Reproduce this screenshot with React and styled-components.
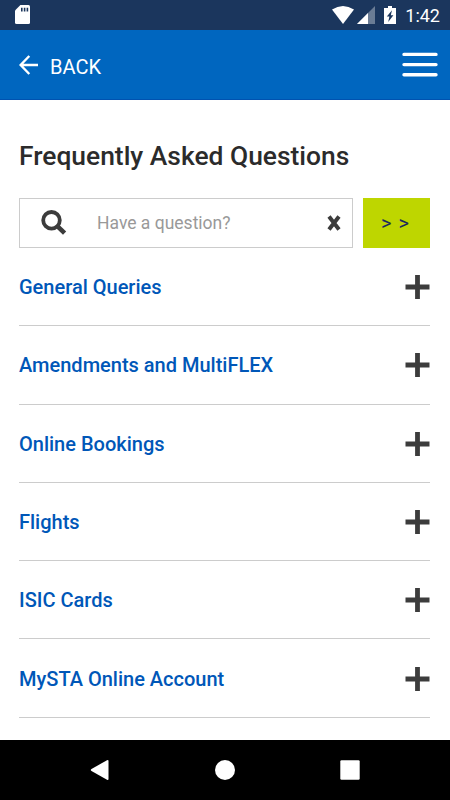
import React from "react";
import styled, { createGlobalStyle } from "styled-components";

const topics = [
  "General Queries",
  "Amendments and MultiFLEX",
  "Online Bookings",
  "Flights",
  "ISIC Cards",
  "MySTA Online Account",
];

const App = () => {
  return (
    <Screen>
      <GlobalStyle />
      <StatusBar>
        <svg width="15" height="19" viewBox="0 0 15 19">
          <path
            fill="#fff"
            d="M5.4 0H13.5Q15 0 15 1.5V17.5Q15 19 13.5 19H1.5Q0 19 0 17.5V5.4Z"
          />
          <path stroke="#1b365d" strokeWidth="1.6" d="M6.8 2.8V6.4M9.6 2.8V6.4M12.4 2.8V6.4" />
        </svg>
        <StatusIcons>
          <svg width="22" height="18" viewBox="0 0 22 18">
            <path fill="#fff" d="M0 3.5Q11 -3.5 22 3.5L11 18Z" />
          </svg>
          <svg width="18" height="18" viewBox="0 0 18 18">
            <path fill="#fff" fillOpacity="0.35" d="M18 0V18H0Z" />
            <path fill="#fff" d="M11 7V18H0Z" />
          </svg>
          <Battery width="12" height="18" viewBox="0 0 12 18">
            <path fill="#fff" d="M4 0H8V2H12V18H0V2H4Z" />
            <path fill="#1b365d" d="M8 4.2L2.8 10.6H5.4L4.2 16L9.4 9.2H6.8Z" />
          </Battery>
          <Clock>1:42</Clock>
        </StatusIcons>
      </StatusBar>
      <Header>
        <Back>
          <svg width="19" height="20" viewBox="0 0 19 20">
            <path
              fill="none"
              stroke="#fff"
              strokeWidth="2.4"
              d="M10.3 1L1.6 10L10.3 19M1.6 10H19"
            />
          </svg>
          <span>BACK</span>
        </Back>
        <svg width="36" height="25" viewBox="0 0 36 25">
          <path
            stroke="#fff"
            strokeWidth="3.4"
            strokeLinecap="round"
            d="M2 2.4H34M2 12.6H34M2 22.8H34"
          />
        </svg>
      </Header>
      <Main>
        <Title>Frequently Asked Questions</Title>
        <Search>
          <Field>
            <svg width="26" height="26" viewBox="0 0 26 26">
              <circle cx="10.5" cy="10.3" r="8.3" fill="none" stroke="#3c3c3c" strokeWidth="3.8" />
              <path stroke="#3c3c3c" strokeWidth="4.6" d="M15.8 15.6L23.6 23.2" />
            </svg>
            <Input placeholder="Have a question?" />
            <svg width="14" height="16" viewBox="0 0 14 16">
              <path stroke="#3c3c3c" strokeWidth="4" d="M2 1.6L12 14.4M12 1.6L2 14.4" />
            </svg>
          </Field>
          <Submit>&gt; &gt;</Submit>
        </Search>
        <List>
          {topics.map((topic) => (
            <Topic key={topic}>
              <span>{topic}</span>
              <svg width="25" height="24" viewBox="0 0 25 24">
                <path stroke="#3c3c3c" strokeWidth="4.8" d="M0.5 12H24.5M12.5 0V24" />
              </svg>
            </Topic>
          ))}
        </List>
      </Main>
      <NavBar>
        <svg width="20" height="20" viewBox="0 0 20 20">
          <path
            fill="#fff"
            d="M1.5 9L17 0.2Q18.5 -0.4 18.5 1V19Q18.5 20.4 17 19.8L1.5 11Q0 10 1.5 9Z"
          />
        </svg>
        <svg width="20" height="20" viewBox="0 0 20 20">
          <circle cx="10" cy="10" r="10" fill="#fff" />
        </svg>
        <svg width="20" height="20" viewBox="0 0 20 20">
          <rect x="0.3" y="0.3" width="19.4" height="19.4" rx="1.2" fill="#fff" />
        </svg>
      </NavBar>
    </Screen>
  );
};

const GlobalStyle = createGlobalStyle`
  * {
    margin: 0;
    padding: 0;
    box-sizing: border-box;
  }
  body {
    font-family: Roboto, "Liberation Sans", sans-serif;
    background: #fff;
  }
  svg {
    display: block;
    flex-shrink: 0;
  }
`;

const Screen = styled.div`
  display: flex;
  flex-direction: column;
  width: 450px;
  height: 800px;
  overflow: hidden;
  background: #fff;
`;

const StatusBar = styled.div`
  display: flex;
  justify-content: space-between;
  height: 30px;
  padding: 5px 10px 0 15px;
  background: #1b365d;
`;

const StatusIcons = styled.div`
  display: flex;
  gap: 3px;
  padding-top: 1px;
`;

const Battery = styled.svg`
  margin-left: 6px;
`;

const Clock = styled.span`
  margin-left: 6px;
  color: #fff;
  font-size: 18px;
  line-height: 20px;
`;

const Header = styled.header`
  display: flex;
  align-items: center;
  justify-content: space-between;
  height: 70px;
  padding: 0 12px 0 19px;
  background: #0066bf;
  border-bottom: 1px solid #0052b0;
`;

const Back = styled.div`
  display: flex;
  align-items: center;
  gap: 12px;
  color: #fff;
  font-size: 20px;
  span {
    padding-top: 4px;
  }
`;

const Main = styled.main`
  flex: 1;
  padding: 41px 20px 0 19px;
  overflow: hidden;
`;

const Title = styled.h1`
  height: 57px;
  color: #2b2b2b;
  font-size: 26.4px;
  font-weight: 500;
  line-height: 31px;
  white-space: nowrap;
`;

const Search = styled.div`
  display: flex;
  gap: 10px;
  height: 50px;
`;

const Field = styled.div`
  display: flex;
  align-items: center;
  width: 334px;
  padding: 0 11px 0 21px;
  border: 1px solid #ccc;
`;

const Input = styled.input`
  flex: 1;
  min-width: 0;
  margin-left: 30px;
  border: none;
  outline: none;
  color: #3c3c3c;
  font-family: inherit;
  font-size: 17.5px;
  &::placeholder {
    color: #999;
  }
`;

const Submit = styled.button`
  width: 67px;
  padding-right: 3px;
  border: none;
  background: #bed600;
  color: #1b2a5d;
  font-family: inherit;
  font-size: 20px;
  font-weight: 400;
  word-spacing: 2px;
`;

const List = styled.ul`
  list-style: none;
`;

const Topic = styled.li`
  display: flex;
  align-items: center;
  justify-content: space-between;
  height: 78.3px;
  padding-top: 1px;
  border-bottom: 1px solid #ccc;
  color: #0057b8;
  font-size: 20px;
  font-weight: 500;
`;

const NavBar = styled.nav`
  display: flex;
  align-items: center;
  justify-content: space-between;
  height: 60px;
  padding: 0 90px;
  background: #000;
`;

export default App;
